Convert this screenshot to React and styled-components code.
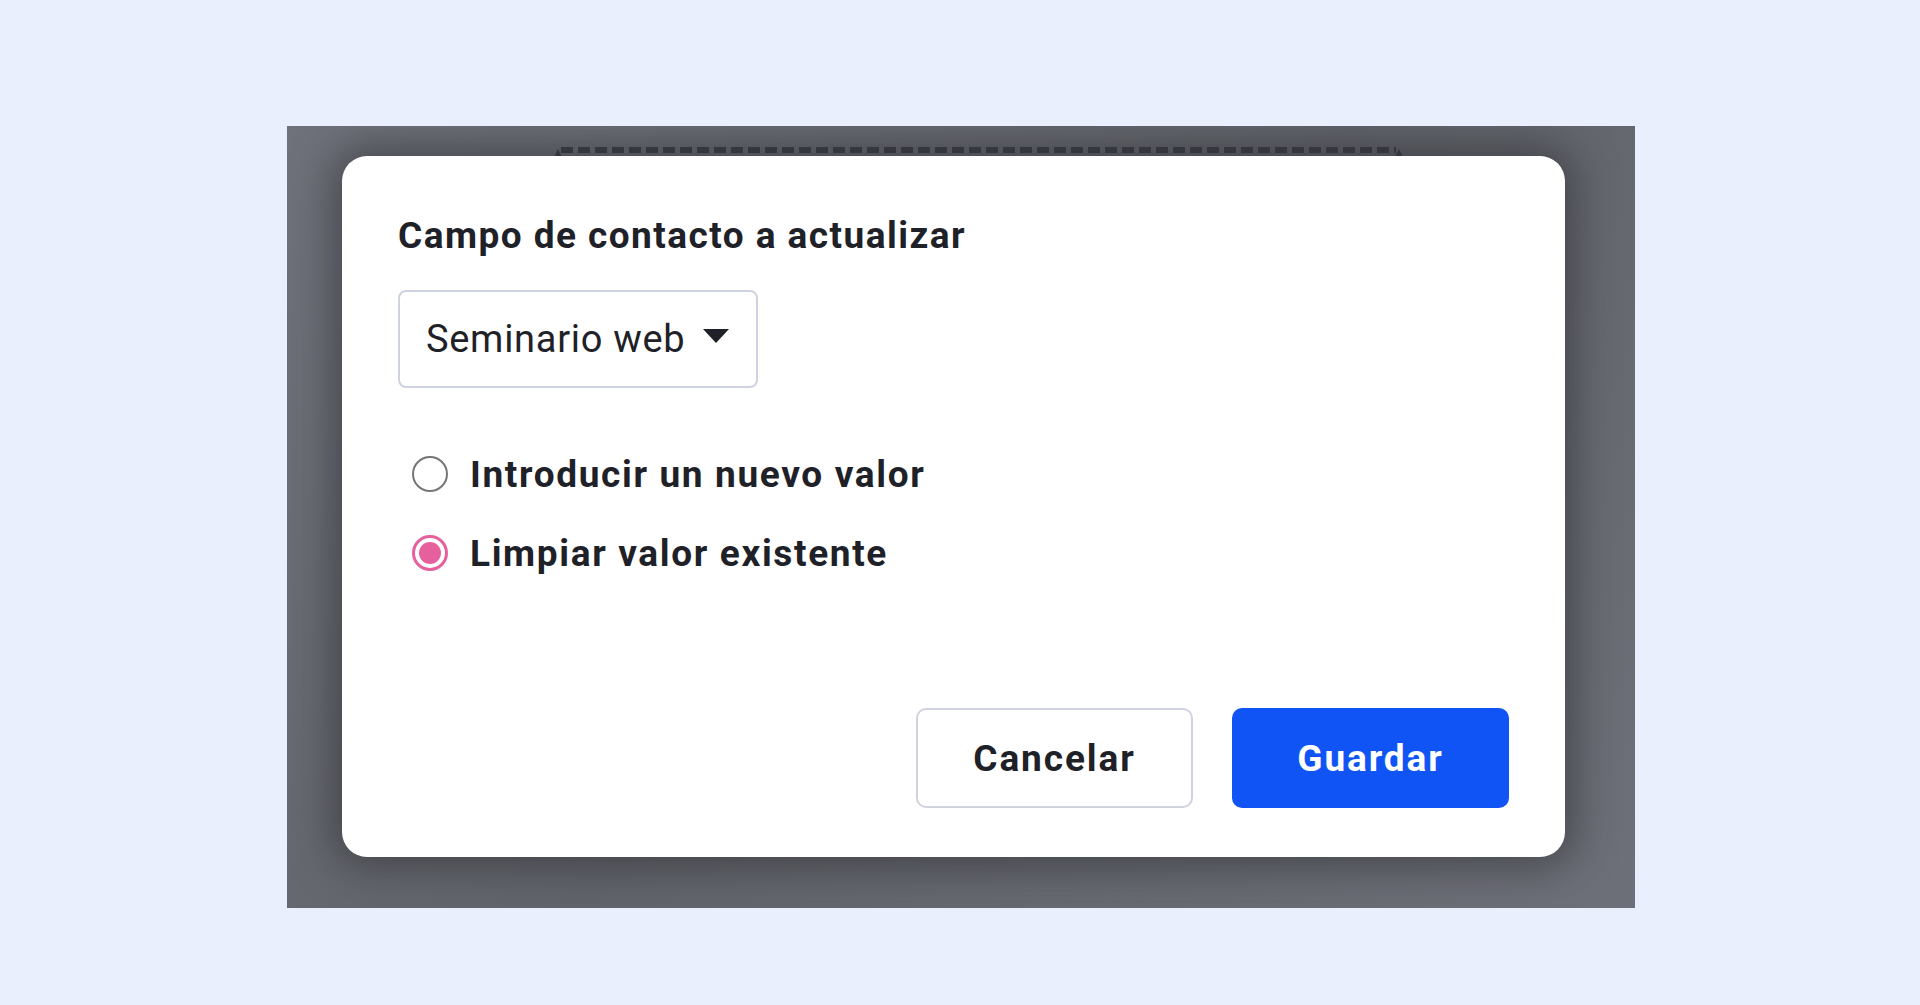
import React, { useState } from "react";
import styled, { createGlobalStyle } from "styled-components";

const GlobalStyle = createGlobalStyle`
  html, body {
    margin: 0;
    padding: 0;
    background: #e9effd;
    font-family: Roboto, "Noto Sans", "Liberation Sans", sans-serif;
    color: #1f2128;
  }
`;

const Page = styled.div`
  min-height: 1005px;
  padding: 126px 0 0 287px;
  box-sizing: border-box;
`;

const Backdrop = styled.div`
  position: relative;
  width: 1348px;
  height: 782px;
  box-sizing: border-box;
  padding: 30px 70px 51px 55px;
  background: linear-gradient(135deg, #70727b 0%, #62646b 50%, #6e7079 100%);
  overflow: hidden;
`;

const DashedStrip = styled.div`
  position: absolute;
  top: 21px;
  left: 274px;
  width: 835px;
  height: 6px;
  background: repeating-linear-gradient(
    90deg,
    #3c3d48 0 12px,
    transparent 12px 17px
  );
  &::before,
  &::after {
    content: "";
    position: absolute;
    bottom: -4px;
    border-left: 4px solid transparent;
    border-right: 4px solid transparent;
    border-bottom: 8px solid #3c3d48;
  }
  &::before { left: -7px; }
  &::after { right: -7px; }
`;

const Dialog = styled.div`
  position: relative;
  height: 701px;
  box-sizing: border-box;
  background: #ffffff;
  border-radius: 25px;
  padding: 58px 56px 49px 56px;
  display: flex;
  flex-direction: column;
  box-shadow: 0 0 40px 10px rgba(40, 41, 46, 0.55);
`;

const Title = styled.h2`
  margin: 0;
  font-size: 37px;
  line-height: 44px;
  font-weight: 700;
  letter-spacing: 1.45px;
`;

const Select = styled.button`
  margin-top: 32px;
  align-self: flex-start;
  height: 98px;
  box-sizing: border-box;
  display: inline-flex;
  align-items: center;
  gap: 18px;
  padding: 0 27px 0 26px;
  background: #fff;
  border: 2px solid #cfd2e0;
  border-radius: 8px;
  font-family: inherit;
  font-size: 38px;
  font-weight: 400;
  letter-spacing: 0.7px;
  color: #1f2128;
  cursor: pointer;
`;

const Caret = styled.span`
  width: 0;
  height: 0;
  border-left: 13px solid transparent;
  border-right: 13px solid transparent;
  border-top: 14px solid #1f2128;
  margin-top: -6px;
`;

const RadioGroup = styled.div`
  margin-top: 64px;
  display: flex;
  flex-direction: column;
  gap: 35px;
`;

const RadioRow = styled.label`
  display: flex;
  align-items: center;
  height: 44px;
  padding-left: 14px;
  gap: 22px;
  font-size: 37px;
  font-weight: 700;
  letter-spacing: 1.65px;
  cursor: pointer;
`;

const RadioCircle = styled.span`
  width: 36px;
  height: 36px;
  box-sizing: border-box;
  border-radius: 50%;
  border: ${(p) => (p.$checked ? "3px solid #e6609e" : "2.5px solid #767676")};
  display: flex;
  align-items: center;
  justify-content: center;
  flex-shrink: 0;
  &::after {
    content: "";
    width: 22px;
    height: 22px;
    border-radius: 50%;
    background: ${(p) => (p.$checked ? "#e6609e" : "transparent")};
  }
`;

const Footer = styled.div`
  margin-top: auto;
  display: flex;
  justify-content: flex-end;
  gap: 39px;
`;

const Button = styled.button`
  width: 277px;
  height: 100px;
  box-sizing: border-box;
  border-radius: 10px;
  font-family: inherit;
  font-size: 37px;
  font-weight: 700;
  letter-spacing: 1.9px;
  cursor: pointer;
  background: ${(p) => (p.$primary ? "#1154f5" : "#ffffff")};
  color: ${(p) => (p.$primary ? "#ffffff" : "#1f2128")};
  border: ${(p) => (p.$primary ? "none" : "2px solid #d0d3df")};
`;

const options = [
  { id: "new", label: "Introducir un nuevo valor" },
  { id: "clear", label: "Limpiar valor existente" },
];

export default function App() {
  const [choice, setChoice] = useState("clear");

  return (
    <>
      <GlobalStyle />
      <Page>
        <Backdrop>
          <DashedStrip />
          <Dialog>
            <Title>Campo de contacto a actualizar</Title>
            <Select type="button">
              Seminario web
              <Caret />
            </Select>
            <RadioGroup>
              {options.map((o) => (
                <RadioRow key={o.id} onClick={() => setChoice(o.id)}>
                  <RadioCircle $checked={choice === o.id} />
                  {o.label}
                </RadioRow>
              ))}
            </RadioGroup>
            <Footer>
              <Button type="button">Cancelar</Button>
              <Button type="button" $primary>Guardar</Button>
            </Footer>
          </Dialog>
        </Backdrop>
      </Page>
    </>
  );
}
